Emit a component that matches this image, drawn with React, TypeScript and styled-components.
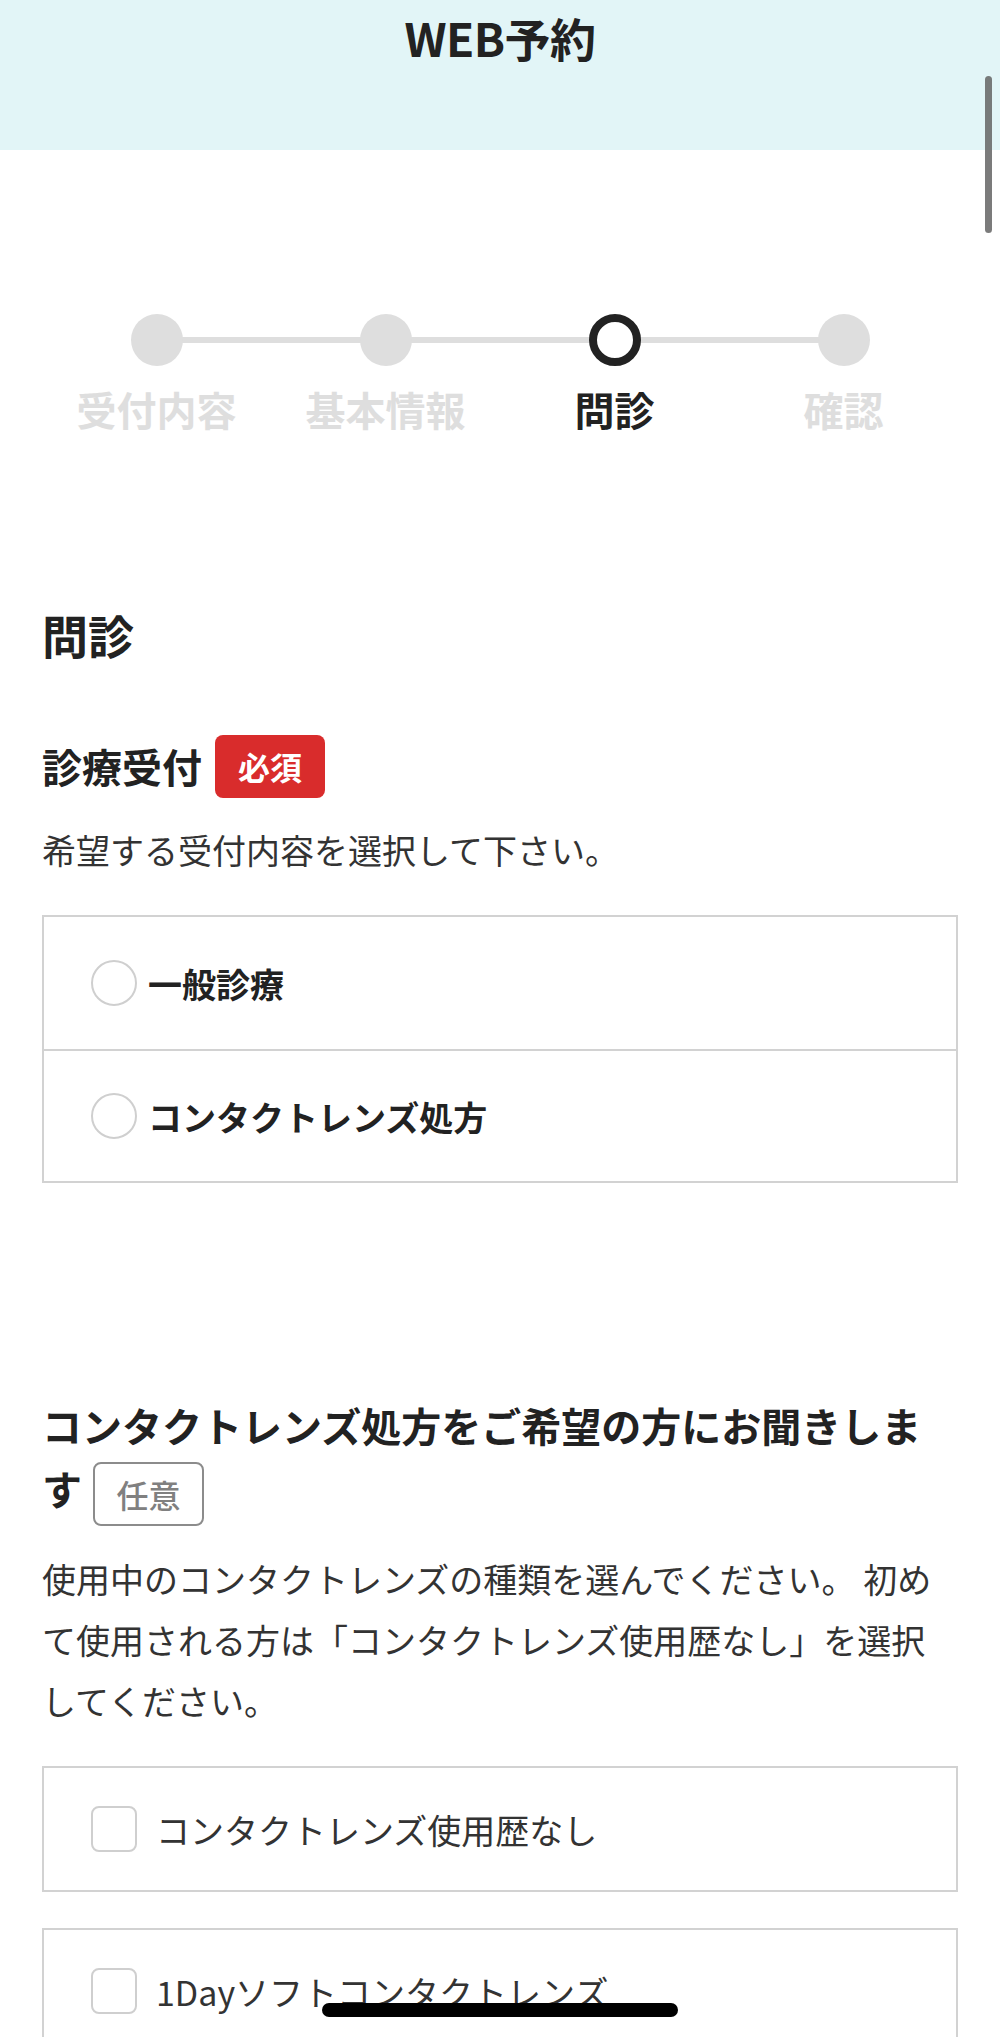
import styled, { createGlobalStyle } from 'styled-components';

const TEXT = '#222';
const BORDER = '#d2d2d2';
const STEP_OFF = '#dedede';

const GlobalStyle = createGlobalStyle`
  html, body {
    margin: 0;
    padding: 0;
    background: #fff;
  }
  body {
    font-family: "Noto Sans CJK JP", "Noto Sans", sans-serif;
    color: ${TEXT};
  }
  * {
    box-sizing: border-box;
  }
`;

const Header = styled.header`
  height: 150px;
  background-color: #e2f5f7;
  display: flex;
  justify-content: center;
  align-items: flex-start;
  padding-top: 7px;
`;

const Title = styled.h1`
  margin: 0;
  font-size: 46px;
  line-height: 60px;
  font-weight: 700;
  letter-spacing: -0.5px;
`;

const Main = styled.main`
  padding: 0 42px 80px;
`;

const Stepper = styled.ol`
  position: relative;
  list-style: none;
  margin: 164px 0 0;
  padding: 0;
  display: grid;
  grid-template-columns: repeat(4, 1fr);
`;

const StepLine = styled.div`
  position: absolute;
  top: 23px;
  left: 12.5%;
  right: 12.5%;
  height: 6px;
  background-color: ${STEP_OFF};
`;

const Step = styled.li`
  position: relative;
  display: flex;
  flex-direction: column;
  align-items: center;
`;

const StepDot = styled.span<{ $active?: boolean }>`
  width: 52px;
  height: 52px;
  border-radius: 50%;
  background-color: ${(p) => (p.$active ? '#fff' : STEP_OFF)};
  border: ${(p) => (p.$active ? `8px solid ${TEXT}` : 'none')};
`;

const StepLabel = styled.span<{ $active?: boolean }>`
  margin-top: 15px;
  font-size: 40px;
  line-height: 56px;
  font-weight: 700;
  color: ${(p) => (p.$active ? TEXT : STEP_OFF)};
`;

const PageHeading = styled.h2`
  margin: 166px 0 0;
  font-size: 46px;
  line-height: 62px;
  font-weight: 700;
`;

const FieldLabel = styled.div`
  margin-top: 70px;
  display: flex;
  align-items: center;
  gap: 13px;
  font-size: 40px;
  line-height: 63px;
  font-weight: 700;
`;

const RequiredBadge = styled.span`
  display: inline-flex;
  align-items: center;
  justify-content: center;
  width: 110px;
  height: 63px;
  border-radius: 8px;
  background-color: #d92c2c;
  color: #fff;
  font-size: 32px;
  font-weight: 700;
`;

const Description = styled.p<{ $top: number }>`
  margin: ${(p) => p.$top}px 0 0;
  font-size: 34px;
  line-height: 61px;
  color: #333;
`;

const OptionList = styled.div`
  margin-top: 35px;
  border: 2px solid ${BORDER};
`;

const RadioRow = styled.label`
  display: flex;
  align-items: center;
  height: 132px;
  padding-left: 47px;
  gap: 11px;
  font-size: 34px;
  font-weight: 700;
  & + & {
    border-top: 2px solid ${BORDER};
  }
`;

const RadioMark = styled.span`
  width: 46px;
  height: 46px;
  border-radius: 50%;
  border: 2px solid #cfcfcf;
  flex-shrink: 0;
`;

const QuestionHeading = styled.h3`
  margin: 211px 0 0;
  font-size: 40px;
  line-height: 63px;
  font-weight: 700;
`;

const OptionalBadge = styled.span`
  display: inline-flex;
  align-items: center;
  justify-content: center;
  width: 111px;
  height: 64px;
  margin-left: 11px;
  vertical-align: middle;
  border: 2px solid #8c8c8c;
  border-radius: 8px;
  color: #808080;
  font-size: 32px;
  font-weight: 500;
`;

const CheckList = styled.div`
  margin-top: 35px;
  display: flex;
  flex-direction: column;
  gap: 36px;
`;

const CheckRow = styled.label`
  display: flex;
  align-items: center;
  height: 126px;
  padding-left: 47px;
  gap: 19px;
  border: 2px solid ${BORDER};
  font-size: 34px;
  color: #333;
`;

const CheckMark = styled.span`
  width: 46px;
  height: 46px;
  border-radius: 8px;
  border: 2px solid #cfcfcf;
  flex-shrink: 0;
`;

const ScrollIndicator = styled.div`
  position: fixed;
  top: 76px;
  left: 985px;
  width: 7px;
  height: 157px;
  border-radius: 4px;
  background-color: rgba(100, 100, 100, 0.85);
`;

const HomeIndicator = styled.div`
  position: fixed;
  top: 2003px;
  left: 322px;
  width: 356px;
  height: 14px;
  border-radius: 7px;
  background-color: #000;
`;

const steps = ['受付内容', '基本情報', '問診', '確認'];
const currentStep = 2;

const reception = ['一般診療', 'コンタクトレンズ処方'];
const lensTypes = ['コンタクトレンズ使用歴なし', '1Dayソフトコンタクトレンズ'];

export default function App() {
  return (
    <>
      <GlobalStyle />
      <Header>
        <Title>WEB予約</Title>
      </Header>
      <Main>
        <Stepper>
          <StepLine />
          {steps.map((s, i) => (
            <Step key={s}>
              <StepDot $active={i === currentStep} />
              <StepLabel $active={i === currentStep}>{s}</StepLabel>
            </Step>
          ))}
        </Stepper>

        <PageHeading>問診</PageHeading>

        <FieldLabel>
          診療受付
          <RequiredBadge>必須</RequiredBadge>
        </FieldLabel>
        <Description $top={21}>希望する受付内容を選択して下さい。</Description>
        <OptionList>
          {reception.map((r) => (
            <RadioRow key={r}>
              <RadioMark />
              {r}
            </RadioRow>
          ))}
        </OptionList>

        <QuestionHeading>
          コンタクトレンズ処方をご希望の方にお聞きします
          <OptionalBadge>任意</OptionalBadge>
        </QuestionHeading>
        <Description $top={22}>
          使用中のコンタクトレンズの種類を選んでください。 初めて使用される方は「コンタクトレンズ使用歴なし」を選択してください。
        </Description>
        <CheckList>
          {lensTypes.map((l) => (
            <CheckRow key={l}>
              <CheckMark />
              {l}
            </CheckRow>
          ))}
        </CheckList>
      </Main>
      <ScrollIndicator />
      <HomeIndicator />
    </>
  );
}
